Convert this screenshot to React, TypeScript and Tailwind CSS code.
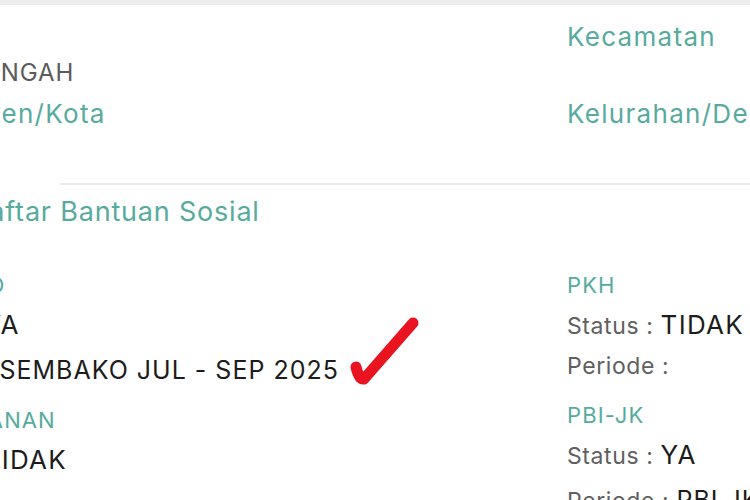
import React from "react";

const TEAL = "text-[#56ab9e]";

interface FieldProps {
  label: string;
  value?: string;
}

function Field({ label, value }: FieldProps) {
  return (
    <div>
      <div className={`text-[26px] leading-[36px] tracking-[0.05em] ${TEAL}`}>
        {label}
      </div>
      <div className="h-[36px] text-[24px] leading-[36px] tracking-[0.04em] text-[#5b5b5b]">
        {value}
      </div>
    </div>
  );
}

interface BansosItemProps {
  name: string;
  status: string;
  periode?: string;
}

function BansosItem({ name, status, periode }: BansosItemProps) {
  return (
    <div className="mb-[10px]">
      <div className={`text-[22px] leading-[40px] tracking-[0.05em] ${TEAL}`}>
        {name}
      </div>
      <div className="text-[26px] leading-[40px] tracking-[0.05em] text-[#1c1c1c]">
        <span className="text-[23px] tracking-[0.6px] text-[#606060]">
          Status :{" "}
        </span>
        {status}
      </div>
      <div
        className={`text-[25px] leading-[38px] tracking-[0.04em] text-[#1c1c1c] ${
          periode ? "pt-[5px]" : ""
        }`}
      >
        <span className="text-[23px] tracking-[0.6px] text-[#606060]">
          Periode :{" "}
        </span>
        {periode}
      </div>
    </div>
  );
}

export default function App() {
  return (
    <div
      className="relative h-[500px] w-[750px] overflow-hidden bg-white"
      style={{ fontFamily: "Inter, 'Noto Sans', sans-serif" }}
    >
      <div className="h-[5px] bg-[#ececec]" />

      <div className="-ml-[110px] mt-[14px] grid w-[1000px] grid-cols-[677px_1fr] gap-y-[5px] whitespace-nowrap">
        <Field label="Provinsi" value="JAWA TENGAH" />
        <Field label="Kecamatan" />
        <Field label="Kabupaten/Kota" />
        <Field label="Kelurahan/Desa" />
      </div>

      <div className="ml-[60px] mt-[15px] h-[2px] bg-[#ececec]" />

      <div
        className={`-ml-[31px] mt-[9px] whitespace-nowrap text-[27px] leading-[36px] tracking-[0.8px] ${TEAL}`}
      >
        Daftar Bantuan Sosial
      </div>

      <div className="-ml-[110px] mt-[35px] grid w-[1000px] grid-cols-[677px_1fr] whitespace-nowrap">
        <div>
          <BansosItem
            name="SEMBAKO"
            status="YA"
            periode="SEMBAKO JUL - SEP 2025"
          />
          <BansosItem name="PERMAKANAN" status="TIDAK" />
        </div>
        <div>
          <BansosItem name="PKH" status="TIDAK" />
          <BansosItem name="PBI-JK" status="YA" periode="PBI JK JUL 2025" />
        </div>
      </div>

      {/* red check mark drawn over the screenshot */}
      <svg
        className="absolute left-[345px] top-[312px]"
        width="80"
        height="75"
        viewBox="345 312 80 75"
      >
        <path
          d="M356 367 Q359 380 364 379 L413 323"
          fill="none"
          stroke="#ea1420"
          strokeWidth="11"
          strokeLinecap="round"
          strokeLinejoin="round"
        />
      </svg>
    </div>
  );
}
